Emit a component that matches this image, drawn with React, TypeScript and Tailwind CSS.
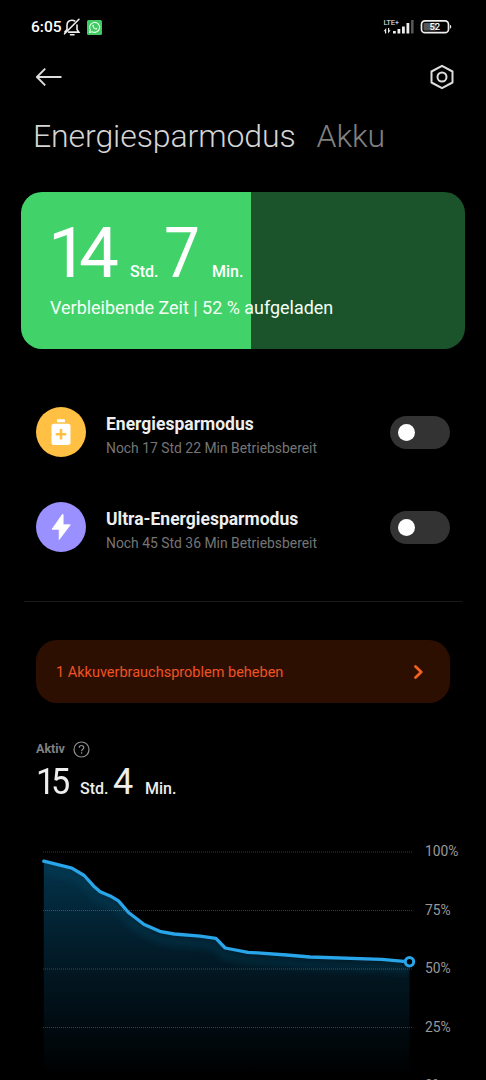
import type { ReactNode } from 'react';

interface ModeRowProps {
  title: string;
  subtitle: string;
  color: string;
  icon: ReactNode;
}

interface DurationProps {
  hours: string;
  minutes: string;
}

const levels = ['100%', '75%', '50%', '25%', '0%'];

// Battery level history, in chart pixels
const history = [
  [7.8, 26.2], [35.9, 33.2], [48.2, 40.5], [57.5, 50.9], [64.2, 56.7], [74.2, 60.9], [82.5, 65.9],
  [92.5, 77.5], [108.2, 89.5], [124.9, 96.7], [138.2, 99], [164.2, 101.2], [179.9, 103.4],
  [189.2, 113], [212, 117.3], [250.7, 120], [274, 122], [345.7, 124.4], [373.5, 126.8],
];

function StatusBar() {
  return (
    <div className="flex h-[54px] items-center justify-between pl-[31px] pr-[33px]">
      <div className="flex items-center">
        <span className="w-[32px] text-[15.5px] font-medium leading-5">6:05</span>
        <svg className="h-[18px] w-[18px]" viewBox="0 0 18 18" fill="none" stroke="#eee" strokeWidth="1.6" strokeLinecap="round">
          <path d="M4 11.5V7.5C4 4.3 6 2.2 9 2.2c1 0 2 .3 2.7.8M14 7v4.5l1.8 2.6H5.5M1.8 14 4 11.5" />
          <path d="M7.5 16.8H11M1.5 15.8 16 1.3" />
        </svg>
        <svg className="ml-[6px] h-[15px] w-[15px]" viewBox="0 0 15 15" fill="none">
          <rect width="15" height="15" rx="1.5" fill="#3fcb62" />
          <path d="m2.5 12.5.8-2.7a5 5 0 1 1 1.9 1.9z" stroke="#e9ffed" strokeWidth="1.1" strokeLinejoin="round" />
          <path d="M5.7 4.7c-.9 1.3.8 4.4 3.3 4.9 1 .1 1.5-.7 1.3-1.2l-1.2-.6-.6.6c-.9-.3-1.6-1-1.9-1.8l.5-.6-.5-1.2z" fill="#e9ffed" />
        </svg>
      </div>
      <div className="flex items-center gap-[5px]">
        <svg className="h-[18px] w-[32px]" viewBox="0 0 32 18" fill="#eee">
          <text x="0.5" y="7" fontSize="7.8" letterSpacing="-0.3">LTE+</text>
          <path d="M3.2 10v5.5H2V13.2H.6L3.2 10zM5 15.5V10h1.2v2.3h1.4L5 15.5z" />
          <path d="M10 13h2.8v2.5H10zM14.5 11h2.8v4.5h-2.8zM19 8.5h2.8v7H19zM23.5 5h2.8v10.5h-2.8z" />
          <path d="M28 2h2.6v13.5H28z" fill="#555" />
        </svg>
        <svg className="h-[14px] w-[33px]" viewBox="0 0 33 14" fill="none">
          <rect x="3.5" y="3" width="13" height="7.5" rx="1" fill="#555" />
          <rect x="1.5" y="0.9" width="27" height="11.8" rx="3.5" stroke="#eee" strokeWidth="1.7" />
          <path d="M30 5h.5c1 .6 1 3 0 3.6H30z" fill="#eee" />
          <text x="14.8" y="10.2" fontSize="9.5" fontWeight="500" fill="#fff" textAnchor="middle">52</text>
        </svg>
      </div>
    </div>
  );
}

function ModeRow({ title, subtitle, color, icon }: ModeRowProps) {
  return (
    <div className="flex h-[50px] items-center">
      <div className={`flex h-[50px] w-[50px] items-center justify-center rounded-full ${color}`}>
        {icon}
      </div>
      <div className="ml-5 flex-1 pt-[7px]">
        <h3 className="text-[17.5px] font-bold leading-6 text-[#eee]">{title}</h3>
        <p className="text-[13.9px] leading-6 text-[#757575]">{subtitle}</p>
      </div>
      <button className="flex h-[33px] w-[60px] items-center rounded-full bg-[#333] pl-2">
        <span className="h-[17px] w-[17px] rounded-full bg-white" />
      </button>
    </div>
  );
}

function RemainingTime({ hours, minutes }: DurationProps) {
  return (
    <div className="flex h-[60px] items-baseline whitespace-nowrap leading-[60px]">
      <span className="w-[82px] text-[71px] tracking-[-9px]">{hours}</span>
      <span className="w-[34px] text-[16px] font-medium">Std.</span>
      <span className="w-[48px] origin-left scale-x-90 text-[71px]">{minutes}</span>
      <span className="text-[16px] font-medium">Min.</span>
    </div>
  );
}

function ActiveTime({ hours, minutes }: DurationProps) {
  return (
    <div className="flex h-[40px] items-baseline whitespace-nowrap leading-[40px] text-[#eee]">
      <span className="w-[44px] origin-left scale-x-95 text-[36px] tracking-[-4.5px]">{hours}</span>
      <span className="w-[33px] text-[16px] font-medium">Std.</span>
      <span className="w-[32px] text-[36px]">{minutes}</span>
      <span className="text-[16px] font-medium">Min.</span>
    </div>
  );
}

function BatteryChart() {
  const line = 'M' + history.map((p) => p.join(' ')).join('L');

  return (
    <svg className="h-[245px] w-[384px] shrink-0" viewBox="0 0 384 245" fill="none">
      <defs>
        <linearGradient id="area" gradientUnits="userSpaceOnUse" x1="0" y1="26" x2="0" y2="240">
          <stop offset="0" stopColor="#04334b" />
          <stop offset="0.4" stopColor="#021d2b" />
          <stop offset="1" stopColor="#000" />
        </linearGradient>
        <filter id="glow" x="-10%" y="-20%" width="120%" height="150%">
          <feGaussianBlur stdDeviation="3" />
        </filter>
        <clipPath id="under">
          <path d={`${line}V245H7.8Z`} />
        </clipPath>
      </defs>
      <path d={`${line}V245H7.8Z`} fill="url(#area)" />
      <g clipPath="url(#under)">
        <path d={line} transform="translate(0 8)" stroke="#0b4a63" strokeOpacity="0.3" strokeWidth="8" filter="url(#glow)" />
      </g>
      {[17, 75.5, 134, 192.5].map((y) => (
        <path key={y} d={`M7 ${y}H377`} stroke="#fff" strokeOpacity="0.22" strokeDasharray="1 1" />
      ))}
      <path d={line} stroke="#29a5ea" strokeWidth="3.3" strokeLinejoin="round" strokeLinecap="round" />
      <circle cx="373.5" cy="126.8" r="4.2" fill="#000" stroke="#29a5ea" strokeWidth="3" />
    </svg>
  );
}

export default function App() {
  return (
    <div className="h-[1080px] w-[486px] overflow-hidden bg-black font-[Roboto,sans-serif] text-white">
      <StatusBar />

      {/* Toolbar */}
      <div className="flex h-[46px] items-center justify-between pl-9 pr-[31px]">
        <svg className="h-[20px] w-[26px]" viewBox="0 0 26 20" fill="none" stroke="#ddd" strokeWidth="1.9">
          <path d="M9.2 1.7.9 10l8.3 8.3M1 10h24.5" />
        </svg>
        <svg className="h-[26px] w-[26px]" viewBox="0 0 26 26" fill="none" stroke="#ddd" strokeWidth="2" strokeLinejoin="round">
          <path d="M13 1.8 23.5 7.5v11L13 24.2 2.5 18.5v-11z" />
          <circle cx="13" cy="13" r="4.5" />
        </svg>
      </div>

      {/* Tabs */}
      <div className="mt-[13px] flex h-[46px] gap-[21px] whitespace-nowrap pl-[33px] text-[32px] font-light leading-[46px] tracking-[-0.1px]">
        <h1 className="text-[#d5d5d5]">Energiesparmodus</h1>
        <h2 className="text-[#808080]">Akku</h2>
      </div>

      {/* Battery card */}
      <div className="ml-[21px] mt-[33px] h-[157px] w-[444px] rounded-[21px] bg-[linear-gradient(to_right,#41d36a_230.5px,#1b542b_230.5px)] pl-[27px] pt-[31px]">
        <RemainingTime hours="14" minutes="7" />
        <p className="ml-[2px] mt-[13px] text-[17.95px] leading-6 text-[#f4fff6]">Verbleibende Zeit | 52 % aufgeladen</p>
      </div>

      {/* Power modes */}
      <div className="mt-[58px] flex flex-col gap-[45px] px-9">
        <ModeRow
          title="Energiesparmodus"
          subtitle="Noch 17 Std 22 Min Betriebsbereit"
          color="bg-[#ffc043]"
          icon={
            <svg className="h-[28px] w-[20px]" viewBox="0 0 20 28">
              <rect x="6" y="1.3" width="8" height="3" rx="0.8" fill="#fff" />
              <rect x="0.5" y="5.8" width="19" height="21.2" rx="2.5" fill="#fff" />
              <path d="M10 11v10.6M4.7 16.3h10.6" stroke="#ffc043" strokeWidth="2.6" />
            </svg>
          }
        />
        <ModeRow
          title="Ultra-Energiesparmodus"
          subtitle="Noch 45 Std 36 Min Betriebsbereit"
          color="bg-[#9b90ff]"
          icon={
            <svg className="h-[28px] w-[20px]" viewBox="0 0 20 28">
              <path d="M11.5 1.3 1 16.3h7.2v10.2L19.3 11.8h-7.2V1.5z" fill="#fff" stroke="#fff" strokeWidth="0.8" strokeLinejoin="round" />
            </svg>
          }
        />
      </div>

      <div className="mx-6 mt-[49px] h-px bg-[#1a1a1a]" />

      {/* Issues */}
      <button className="ml-9 mt-[38px] flex h-[63px] w-[414px] items-center justify-between rounded-[21px] bg-[#2d0f02] pl-5 pr-[26px] text-[14.5px] text-[#ef5223]">
        <span className="pt-[2px]">1 Akkuverbrauchsproblem beheben</span>
        <svg className="h-4 w-[11px]" viewBox="0 0 11 16" fill="none" stroke="#f2611f" strokeWidth="2.8" strokeLinecap="round" strokeLinejoin="round">
          <path d="m2.5 2.5 5.7 5.5-5.7 5.5" />
        </svg>
      </button>

      {/* Active time */}
      <div className="mt-[34px] px-9">
        <div className="flex h-6 items-center gap-2 text-[#808080]">
          <span className="text-[12.5px] font-bold">Aktiv</span>
          <svg className="h-[17px] w-[17px]" viewBox="0 0 17 17" fill="none" stroke="#909090">
            <circle cx="8.5" cy="8.5" r="7.5" strokeWidth="1.2" />
            <path d="M6.2 6.7c.1-3 4.6-2.8 4.6 0 0 1.6-2.2 1.7-2.2 3.5M8.6 11.3v1.4" strokeWidth="1.2" />
          </svg>
        </div>
        <div className="pt-px">
          <ActiveTime hours="15" minutes="4" />
        </div>
      </div>

      {/* Chart */}
      <div className="mt-[33px] flex pl-9">
        <BatteryChart />
        <div className="ml-[5px] mt-[6px] flex flex-col gap-[38.5px] text-[13.8px] leading-5 text-[#999]">
          {levels.map((level) => (
            <span key={level}>{level}</span>
          ))}
        </div>
      </div>
    </div>
  );
}
